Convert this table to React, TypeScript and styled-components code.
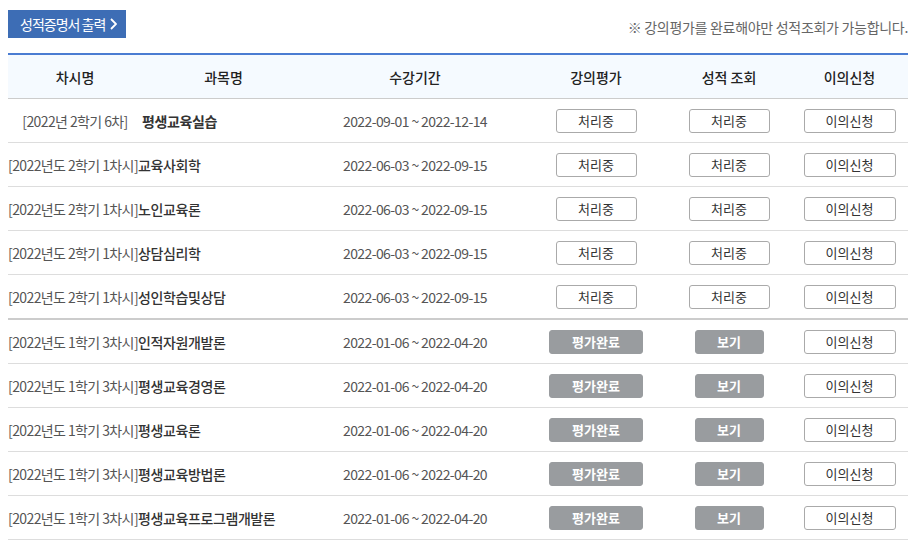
import styled, { createGlobalStyle } from 'styled-components';

const GlobalStyle = createGlobalStyle`
  html, body {
    margin: 0;
    padding: 0;
    background: #fff;
  }
  body {
    font-family: "Noto Sans CJK KR", "Noto Sans", sans-serif;
    color: #333;
  }
`;

const Page = styled.div`
  width: 920px;
  padding: 10px 12px 0 8px;
  box-sizing: border-box;
`;

const TopBar = styled.div`
  display: flex;
  justify-content: space-between;
  align-items: flex-end;
  margin-bottom: 15px;
`;

const PrintButton = styled.button`
  display: flex;
  align-items: center;
  gap: 5px;
  width: 118px;
  height: 28px;
  padding: 0 0 0 12px;
  border: none;
  background: #3d6db5;
  color: #fff;
  font-family: inherit;
  font-size: 14px;
  letter-spacing: -1px;
  cursor: pointer;
`;

const Notice = styled.p`
  margin: 0 0 1px;
  font-size: 14px;
  color: #666;
  letter-spacing: -0.3px;
`;

const Table = styled.table`
  width: 900px;
  border-collapse: collapse;
  table-layout: fixed;
  border-top: 2px solid #4a7cd2;
  border-bottom: 1px solid #4a72b8;
`;

const HeadCell = styled.th`
  height: 43px;
  background: #f5faff;
  border-bottom: 1px solid #ccc;
  font-size: 14px;
  font-weight: 500;
  color: #222;
  text-align: center;
  padding: 0;
`;

const Row = styled.tr<{ $divider?: boolean }>`
  border-bottom: ${(p) => (p.$divider ? '2px solid #ccc' : '1px solid #ddd')};
`;

const Cell = styled.td<{ $align?: string }>`
  height: 43px;
  padding: 0;
  font-size: 14px;
  color: #555;
  text-align: ${(p) => p.$align || 'center'};
  letter-spacing: -0.6px;
  white-space: nowrap;
`;

const Term = styled.span`
  color: #555;
`;

const Subject = styled.span<{ $bold?: boolean }>`
  color: #333;
  font-weight: ${(p) => (p.$bold ? 700 : 500)};
  letter-spacing: -0.4px;
`;

const ActionButton = styled.button<{ $filled?: boolean; $w: number }>`
  display: inline-block;
  vertical-align: middle;
  width: ${(p) => p.$w}px;
  height: 24px;
  padding: 0;
  border-radius: 3px;
  border: 1px solid ${(p) => (p.$filled ? '#999c9f' : '#aaa')};
  background: ${(p) => (p.$filled ? '#999c9f' : '#fff')};
  color: ${(p) => (p.$filled ? '#fff' : '#333')};
  font-family: inherit;
  font-size: 13px;
  font-weight: ${(p) => (p.$filled ? 700 : 400)};
  line-height: 20px;
  cursor: pointer;
`;

type Course = {
  term: string;
  subject: string;
  period: string;
  done: boolean;
};

const courses: Course[] = [
  { term: '[2022년도 2학기 1차시]', subject: '교육사회학', period: '2022-06-03 ~ 2022-09-15', done: false },
  { term: '[2022년도 2학기 1차시]', subject: '노인교육론', period: '2022-06-03 ~ 2022-09-15', done: false },
  { term: '[2022년도 2학기 1차시]', subject: '상담심리학', period: '2022-06-03 ~ 2022-09-15', done: false },
  { term: '[2022년도 2학기 1차시]', subject: '성인학습및상담', period: '2022-06-03 ~ 2022-09-15', done: false },
  { term: '[2022년도 1학기 3차시]', subject: '인적자원개발론', period: '2022-01-06 ~ 2022-04-20', done: true },
  { term: '[2022년도 1학기 3차시]', subject: '평생교육경영론', period: '2022-01-06 ~ 2022-04-20', done: true },
  { term: '[2022년도 1학기 3차시]', subject: '평생교육론', period: '2022-01-06 ~ 2022-04-20', done: true },
  { term: '[2022년도 1학기 3차시]', subject: '평생교육방법론', period: '2022-01-06 ~ 2022-04-20', done: true },
  { term: '[2022년도 1학기 3차시]', subject: '평생교육프로그램개발론', period: '2022-01-06 ~ 2022-04-20', done: true },
];

function Chevron() {
  return (
    <svg width="7" height="12" viewBox="0 0 7 12">
      <path d="M1 1l5 5-5 5" fill="none" stroke="#fff" strokeWidth="1.8" />
    </svg>
  );
}

function Actions({ done }: { done: boolean }) {
  return (
    <>
      <Cell>
        {done ? (
          <ActionButton $filled $w={94}>평가완료</ActionButton>
        ) : (
          <ActionButton $w={81}>처리중</ActionButton>
        )}
      </Cell>
      <Cell>
        {done ? (
          <ActionButton $filled $w={69}>보기</ActionButton>
        ) : (
          <ActionButton $w={81}>처리중</ActionButton>
        )}
      </Cell>
      <Cell>
        <ActionButton $w={92}>이의신청</ActionButton>
      </Cell>
    </>
  );
}

export default function App() {
  return (
    <Page>
      <GlobalStyle />
      <TopBar>
        <PrintButton>
          성적증명서 출력 <Chevron />
        </PrintButton>
        <Notice>※ 강의평가를 완료해야만 성적조회가 가능합니다.</Notice>
      </TopBar>
      <Table>
        <colgroup>
          <col style={{ width: 134 }} />
          <col style={{ width: 163 }} />
          <col style={{ width: 220 }} />
          <col style={{ width: 142 }} />
          <col style={{ width: 124 }} />
          <col style={{ width: 117 }} />
        </colgroup>
        <thead>
          <tr>
            <HeadCell>차시명</HeadCell>
            <HeadCell>과목명</HeadCell>
            <HeadCell>수강기간</HeadCell>
            <HeadCell>강의평가</HeadCell>
            <HeadCell>성적 조회</HeadCell>
            <HeadCell>이의신청</HeadCell>
          </tr>
        </thead>
        <tbody>
          <Row>
            <Cell>
              <Term>[2022년 2학기 6차]</Term>
            </Cell>
            <Cell $align="left">
              <Subject $bold>평생교육실습</Subject>
            </Cell>
            <Cell>2022-09-01 ~ 2022-12-14</Cell>
            <Actions done={false} />
          </Row>
          {courses.map((c, i) => (
            <Row key={c.subject} $divider={i === 3}>
              <Cell colSpan={2} $align="left">
                <Term>{c.term}</Term>
                <Subject>{c.subject}</Subject>
              </Cell>
              <Cell>{c.period}</Cell>
              <Actions done={c.done} />
            </Row>
          ))}
        </tbody>
      </Table>
    </Page>
  );
}
